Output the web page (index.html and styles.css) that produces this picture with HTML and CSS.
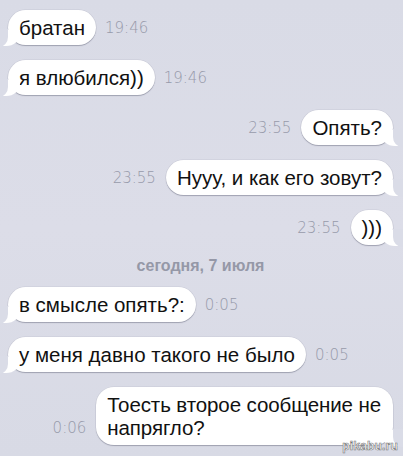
FILE: index.html
```html
<!DOCTYPE html>
<html lang="ru">
<head>
<meta charset="utf-8">
<link rel="stylesheet" href="styles.css">
</head>
<body>
<div class="chat">
  <div class="row in"><div class="bubble">братан</div><span class="time">19:46</span></div>
  <div class="row in"><div class="bubble">я влюбился))</div><span class="time">19:46</span></div>
  <div class="row out"><span class="time">23:55</span><div class="bubble">Опять?</div></div>
  <div class="row out"><span class="time">23:55</span><div class="bubble">Нууу, и как его зовут?</div></div>
  <div class="row out"><span class="time">23:55</span><div class="bubble">)))</div></div>
  <div class="date">сегодня, 7 июля</div>
  <div class="row in"><div class="bubble">в смысле опять?:</div><span class="time">0:05</span></div>
  <div class="row in"><div class="bubble">у меня давно такого не было</div><span class="time">0:05</span></div>
  <div class="row out"><span class="time">0:06</span><div class="bubble multi">Тоесть второе сообщение не<br>напрягло?</div></div>
</div>
<div class="watermark">pikabu.ru</div>
</body>
</html>
```
FILE: styles.css
```css
html, body {
  margin: 0;
  height: 100%;
}
body {
  background: linear-gradient(180deg, #d9dbe6 0%, #dcdde8 50%, #d8dae5 100%);
  font-family: "Liberation Sans", Arial, sans-serif;
  overflow: hidden;
  position: relative;
}
.chat {
  display: flex;
  flex-direction: column;
  gap: 15px;
  padding: 10px 10px 0 8px;
}
.row {
  display: flex;
  align-items: flex-end;
  gap: 9px;
}
.row.out {
  justify-content: flex-end;
  gap: 10px;
}
.bubble {
  position: relative;
  background: #fff;
  color: #111;
  font-size: 20.5px;
  line-height: 23px;
  padding: 6px 11px;
  border-radius: 18px;
  box-shadow: 0 1px 1px rgba(70, 72, 95, 0.35), 0 0 0 0.5px rgba(70, 72, 95, 0.12);
  white-space: nowrap;
}
.bubble.multi {
  letter-spacing: -0.1px;
  padding-right: 12px;
}
.row.in .bubble::before {
  content: "";
  position: absolute;
  left: -6px;
  bottom: -1px;
  width: 18px;
  height: 16px;
  background: #fff;
  border-bottom-right-radius: 14px 12px;
}
.row.in .bubble::after {
  content: "";
  position: absolute;
  left: -12px;
  bottom: -2px;
  width: 12px;
  height: 18px;
  background: #dadce7;
  border-bottom-right-radius: 9px 10px;
}
.row.out .bubble::before {
  content: "";
  position: absolute;
  right: -6px;
  bottom: -1px;
  width: 18px;
  height: 16px;
  background: #fff;
  border-bottom-left-radius: 14px 12px;
}
.row.out .bubble::after {
  content: "";
  position: absolute;
  right: -12px;
  bottom: -2px;
  width: 12px;
  height: 18px;
  background: #dadce7;
  border-bottom-left-radius: 9px 10px;
}
.time {
  font-family: "DejaVu Sans", sans-serif;
  font-weight: 200;
  font-size: 15px;
  line-height: 16px;
  color: #979aaa;
  padding-bottom: 9px;
}
.date {
  text-align: center;
  font-weight: bold;
  font-size: 16px;
  line-height: 12px;
  color: #9598a7;
}
.watermark {
  position: absolute;
  right: 5px;
  bottom: 3px;
  font-family: "Liberation Sans", Arial, sans-serif;
  font-weight: bold;
  font-size: 12px;
  color: #fff;
  -webkit-text-stroke: 0.6px #777;
  letter-spacing: 0.2px;
}
```
